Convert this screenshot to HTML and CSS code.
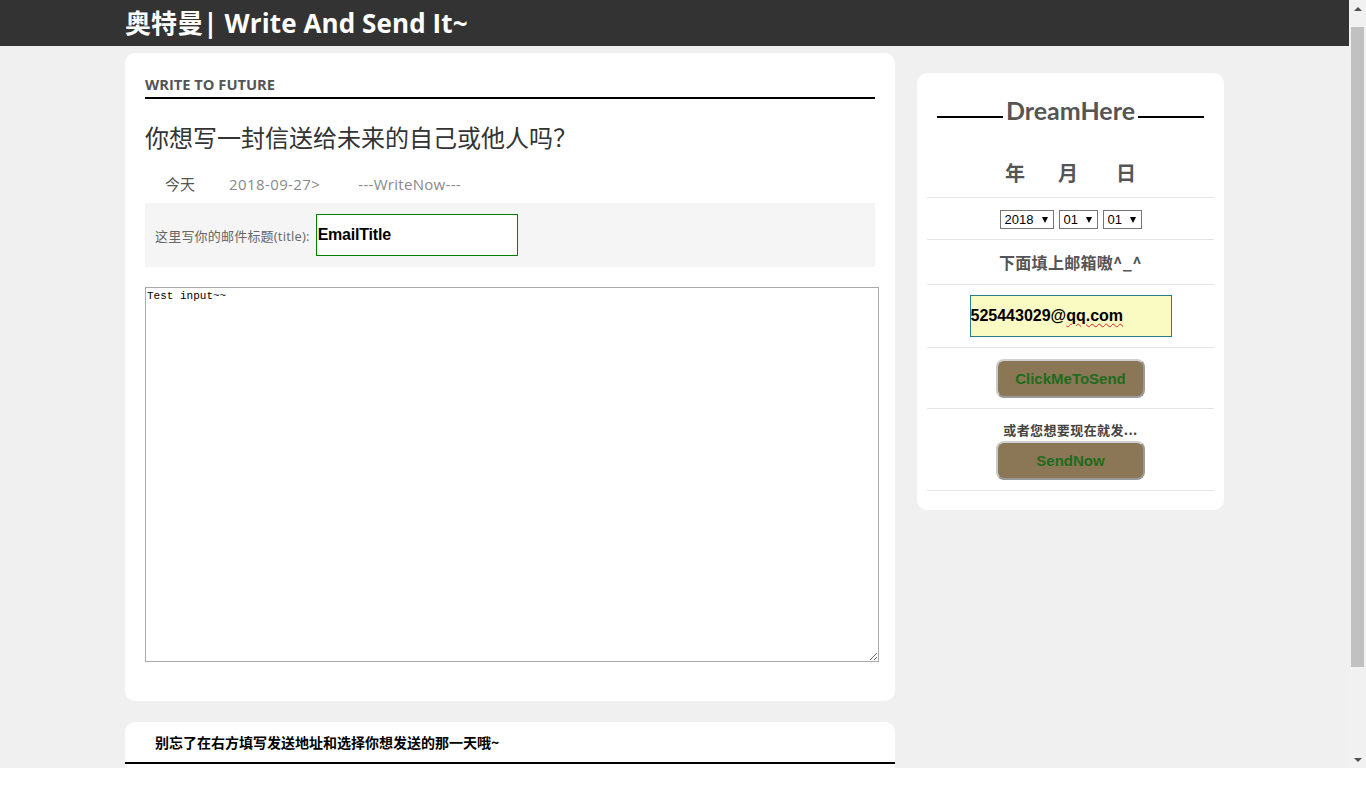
FILE: index.html
```html
<!DOCTYPE html>
<html lang="zh-CN">
<head>
<meta charset="utf-8">
<title>奥特曼| Write And Send It~</title>
<link rel="stylesheet" href="styles.css">
</head>
<body>
<div class="frame">
  <div class="viewport">
    <header class="topbar">
      <div class="container">
        <h1 class="brand">奥特曼| Write And Send It~</h1>
      </div>
    </header>
    <main class="container layout">
      <div class="left-col">
        <section class="card write-card">
          <h2 class="section-title">WRITE TO FUTURE</h2>
          <h3 class="question">你想写一封信送给未来的自己或他人吗？</h3>
          <div class="date-row">
            <span class="today">今天</span>
            <span class="date">2018-09-27&gt;</span>
            <span class="write-now">---WriteNow---</span>
          </div>
          <div class="title-box">
            <label class="title-label">这里写你的邮件标题(title):</label>
            <input class="title-input" type="text" value="EmailTitle">
          </div>
          <textarea class="letter">Test input~~</textarea>
        </section>
        <section class="card note-card">
          <p class="note">别忘了在右方填写发送地址和选择你想发送的那一天哦~</p>
        </section>
      </div>
      <aside class="card side-card">
        <div class="dream">
          <span class="dream-line"></span>
          <span class="dream-text">DreamHere</span>
          <span class="dream-line"></span>
        </div>
        <div class="row ymd">
          <span class="y">年</span><span class="m">月</span><span class="d">日</span>
        </div>
        <div class="row selects">
          <span class="sel sel-year"><select><option>2018</option></select></span>
          <span class="sel"><select><option>01</option></select></span>
          <span class="sel"><select><option>01</option></select></span>
        </div>
        <div class="row mail-label">下面填上邮箱嗷^_^</div>
        <div class="row mail-row">
          <div class="mail-box">525443029@<span class="typo">qq.com</span></div>
        </div>
        <div class="row btn-row">
          <button class="btn">ClickMeToSend</button>
        </div>
        <div class="row now-row">
          <div class="now-text">或者您想要现在就发...</div>
          <button class="btn">SendNow</button>
        </div>
      </aside>
    </main>
  </div>
  <div class="scrollbar">
    <span class="arrow up"></span>
    <span class="thumb"></span>
    <span class="arrow down"></span>
  </div>
</div>
</body>
</html>
```
FILE: styles.css
```css
html, body {
  margin: 0;
  padding: 0;
  background: #ffffff;
  overflow: hidden;
}
body {
  font-family: "Open Sans", "Noto Sans CJK SC", sans-serif;
  width: 1366px;
  height: 806px;
}
.frame {
  height: 768px;
  display: flex;
}
.viewport {
  flex: 1;
  background: #f0f0f0;
  overflow: hidden;
}
.container {
  width: 1099px;
  margin: 0 auto;
}
.topbar {
  background: #333333;
  height: 46px;
}
.brand {
  margin: 0;
  color: #ffffff;
  font-family: "Open Sans", "Noto Sans CJK SC", sans-serif;
  font-weight: 700;
  font-size: 26px;
  line-height: 46px;
  letter-spacing: 0.1px;
}
.layout {
  display: flex;
  align-items: flex-start;
  gap: 22px;
}
.left-col {
  width: 770px;
  display: flex;
  flex-direction: column;
}
.card {
  background: #ffffff;
  border-radius: 10px;
}
.write-card {
  margin-top: 7px;
  padding: 21px 20px 39px 20px;
  height: 588px;
}
.section-title {
  margin: 0;
  font-size: 14.7px;
  line-height: 20px;
  font-weight: 700;
  color: #555555;
  padding-bottom: 3px;
  border-bottom: 2px solid #000000;
}
.question {
  margin: 21px 0 0 0;
  font-size: 24px;
  line-height: 34px;
  font-weight: 400;
  color: #333333;
  font-family: "Noto Sans CJK SC", sans-serif;
}
.date-row {
  margin-top: 20px;
  padding-left: 20px;
  font-size: 15px;
  line-height: 20px;
  color: #8a8a8a;
  display: flex;
  font-family: "Open Sans", "Noto Sans CJK SC", sans-serif;
}
.today {
  color: #555555;
  margin-right: 34px;
}
.date {
  margin-right: 38px;
  letter-spacing: 0.4px;
}
.write-now {
  letter-spacing: 0.3px;
}
.title-box {
  margin-top: 9px;
  background: #f5f5f5;
  padding: 11px 10px;
  display: flex;
  align-items: center;
}
.title-label {
  font-size: 13px;
  color: #666666;
  margin-right: 6px;
  letter-spacing: 0.2px;
  font-family: "Open Sans", "Noto Sans CJK SC", sans-serif;
}
.title-input {
  box-sizing: border-box;
  width: 202px;
  height: 42px;
  border: 1px solid #008000;
  padding: 0 1px;
  margin: 0;
  font-family: "Liberation Sans", Arial, sans-serif;
  font-weight: 700;
  font-size: 16px;
  color: #000000;
  background: #ffffff;
  outline: none;
  letter-spacing: -0.2px;
}
.letter {
  display: block;
  box-sizing: border-box;
  margin-top: 20px;
  width: 734px;
  height: 375px;
  border: 1px solid #a9a9a9;
  padding: 2px 1px;
  font-family: "Liberation Mono", monospace;
  font-size: 11px;
  color: #000000;
  resize: both;
  background: #ffffff;
}
.note-card {
  margin-top: 21px;
  border-radius: 10px 10px 0 0;
  height: 120px;
}
.note {
  margin: 0;
  padding: 12px 30px 12px 30px;
  font-size: 14px;
  line-height: 16px;
  font-weight: 700;
  color: #000000;
  border-bottom: 2px solid #000000;
  font-family: "Noto Sans CJK SC", sans-serif;
}
.side-card {
  width: 307px;
  box-sizing: border-box;
  margin-top: 27px;
  padding: 0 10px 19px 10px;
}
.dream {
  margin-top: 20px;
  display: flex;
  justify-content: center;
  align-items: flex-end;
  padding: 0 10px;
}
.dream-line {
  display: block;
  width: 66px;
  height: 2px;
  background: #000000;
  margin-bottom: 9px;
}
.dream-text {
  font-family: Lato, sans-serif;
  font-weight: 700;
  font-size: 25px;
  line-height: 34px;
  color: #555555;
  margin: 0 3px;
}
.row {
  border-bottom: 1px solid #e5e5e5;
  box-sizing: border-box;
}
.ymd {
  height: 71px;
  padding-top: 32px;
  display: flex;
  justify-content: center;
  font-size: 20px;
  line-height: 28px;
  font-weight: 700;
  color: #555555;
  font-family: "Noto Sans CJK SC", sans-serif;
}
.y { margin-right: 33px; }
.m { margin-right: 38px; }
.selects {
  height: 42px;
  display: flex;
  justify-content: center;
  align-items: flex-start;
  padding-top: 12px;
  gap: 5px;
}
.sel {
  position: relative;
  display: flex;
}
.sel select {
  appearance: none;
  -webkit-appearance: none;
  box-sizing: border-box;
  height: 19px;
  width: 39px;
  border: 1px solid #767676;
  border-radius: 0;
  background: #ffffff;
  font-family: "Liberation Sans", Arial, sans-serif;
  font-size: 13px;
  line-height: 17px;
  padding: 0 0 0 4px;
  margin: 0;
  color: #000000;
}
.sel-year select {
  width: 54px;
}
.sel::after {
  content: "";
  position: absolute;
  right: 6px;
  top: 7px;
  width: 0;
  height: 0;
  border-left: 3.5px solid transparent;
  border-right: 3.5px solid transparent;
  border-top: 6px solid #000000;
  pointer-events: none;
}
.mail-label {
  height: 45px;
  text-align: center;
  font-size: 16px;
  line-height: 44px;
  font-weight: 700;
  color: #555555;
  letter-spacing: 0.3px;
  font-family: "Noto Sans CJK SC", sans-serif;
}
.mail-row {
  height: 63px;
  display: flex;
  justify-content: center;
  padding-top: 10px;
}
.mail-box {
  box-sizing: border-box;
  width: 202px;
  height: 42px;
  border: 1px solid #2b7d8c;
  background: #fafac3;
  font-family: "Liberation Sans", Arial, sans-serif;
  font-weight: 700;
  font-size: 16px;
  line-height: 40px;
  color: #000000;
  padding-left: 0;
}
.typo {
  text-decoration: underline wavy #e02020;
  text-decoration-thickness: 1px;
  text-underline-offset: 2px;
}
.btn-row {
  height: 61px;
  display: flex;
  justify-content: center;
  padding-top: 11px;
}
.btn {
  box-sizing: border-box;
  width: 149px;
  height: 39px;
  background: #8b7755;
  border: 2px solid #9a9a9a;
  border-top-color: #d0d0d0;
  border-left-color: #c8c8c8;
  border-radius: 8px;
  color: #1e6b1e;
  font-family: "Liberation Sans", Arial, sans-serif;
  font-weight: 700;
  font-size: 15px;
  padding: 0;
  margin: 0;
}
.now-row {
  height: 82px;
  display: flex;
  flex-direction: column;
  align-items: center;
  padding-top: 12px;
}
.now-text {
  font-size: 13px;
  line-height: 18px;
  font-weight: 700;
  color: #444444;
  margin-bottom: 2px;
  letter-spacing: 0.4px;
  font-family: "Noto Sans CJK SC", sans-serif;
}
.scrollbar {
  width: 17px;
  background: #f1f1f1;
  position: relative;
}
.thumb {
  position: absolute;
  left: 2px;
  top: 27px;
  width: 13px;
  height: 640px;
  background: #c1c1c1;
}
.arrow {
  position: absolute;
  left: 5px;
  width: 0;
  height: 0;
  border-left: 4px solid transparent;
  border-right: 4px solid transparent;
}
.arrow.up {
  top: 7px;
  border-bottom: 4px solid #505050;
}
.arrow.down {
  bottom: 6px;
  border-top: 4px solid #505050;
}
```
